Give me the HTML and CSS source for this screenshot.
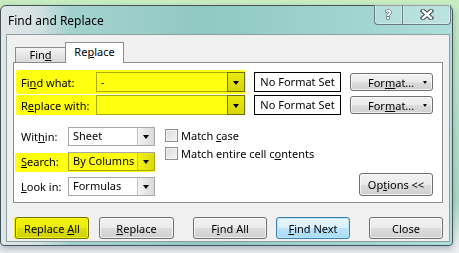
FILE: index.html
```html
<!DOCTYPE html>
<html lang="en">
<head>
    <meta charset="UTF-8">
    <title>Find and Replace</title>
    <link rel="stylesheet" href="styles.css">
</head>
<body>
    <div class="window">
        <div class="titlebar">
            <span class="title">Find and Replace</span>
            <div class="caption-btns">
                <span class="cap help">?</span>
                <span class="cap close">
                    <svg width="14" height="11" viewBox="0 0 14 11">
                        <path d="M3 2 L11 9 M11 2 L3 9" stroke="#3a4448" stroke-width="4.4" stroke-linecap="square" fill="none"/>
                        <path d="M3 2 L11 9 M11 2 L3 9" stroke="#ffffff" stroke-width="2.4" stroke-linecap="square" fill="none"/>
                    </svg>
                </span>
            </div>
        </div>

        <div class="client">
            <div class="tabs">
                <div class="tab">Fin<u>d</u></div>
                <div class="tab active">Re<u>p</u>lace</div>
            </div>

            <div class="panel">
                <div class="row">
                    <span class="lbl">Fi<u>n</u>d what:</span>
                    <div class="combo wide hot">
                        <span class="combo-text">-</span>
                        <span class="combo-btn"><i class="tri"></i></span>
                    </div>
                    <div class="fmt-box">No Format Set</div>
                    <button class="btn fmt"><span>For<u>m</u>at...</span> <span class="caret"></span></button>
                </div>
                <div class="row second">
                    <span class="lbl">R<u>e</u>place with:</span>
                    <div class="combo wide hot">
                        <span class="combo-text"></span>
                        <span class="combo-btn"><i class="tri"></i></span>
                    </div>
                    <div class="fmt-box">No Format Set</div>
                    <button class="btn fmt"><span>For<u>m</u>at...</span> <span class="caret"></span></button>
                </div>

                <div class="lower">
                    <div class="opts">
                        <div class="opt-row">
                            <span class="lbl small">Wit<u>h</u>in:</span>
                            <div class="combo select">
                                <span class="combo-text">Sheet</span>
                                <span class="combo-btn"><i class="tri"></i></span>
                            </div>
                        </div>
                        <div class="opt-row">
                            <span class="lbl small"><u>S</u>earch:</span>
                            <div class="combo select">
                                <span class="combo-text">By Columns</span>
                                <span class="combo-btn"><i class="tri"></i></span>
                            </div>
                        </div>
                        <div class="opt-row">
                            <span class="lbl small"><u>L</u>ook in:</span>
                            <div class="combo select">
                                <span class="combo-text">Formulas</span>
                                <span class="combo-btn"><i class="tri"></i></span>
                            </div>
                        </div>
                    </div>
                    <div class="checks">
                        <div class="check"><span class="box"></span><span>Match <u>c</u>ase</span></div>
                        <div class="check"><span class="box"></span><span>Match entire cell c<u>o</u>ntents</span></div>
                    </div>
                    <button class="btn options">Op<u>t</u>ions &lt;&lt;</button>
                </div>
            </div>

            <div class="actions">
                <button class="btn act">Replace <u>A</u>ll</button>
                <button class="btn act replace"><u>R</u>eplace</button>
                <button class="btn act gap">F<u>i</u>nd All</button>
                <button class="btn act default"><u>F</u>ind Next</button>
                <button class="btn act gap">Close</button>
            </div>
        </div>

        <!-- highlighter strokes -->
        <span class="hl hl-find"></span>
        <span class="hl hl-replace"></span>
        <span class="hl hl-search"></span>
        <span class="hl hl-all"></span>
    </div>
</body>
</html>
```

FILE: styles.css
```css
body {
    margin: 0;
    width: 459px;
    height: 253px;
    overflow: hidden;
    font-family: "Noto Sans", "Open Sans", sans-serif;
    font-size: 11px;
    color: #000000;
    background: linear-gradient(to bottom, #c8ecc1 0%, #acd8c6 80%, #eceff0 97%);
}

.window {
    position: relative;
    margin-top: 5px;
    width: 453px;
    height: 241px;
    box-sizing: border-box;
    border: 1px solid #44525a;
    border-radius: 6px 6px 4px 4px;
    background: linear-gradient(90deg, #e1e6e7 0, #d6e2e2 35px, #a3d2ce 70px, #91c8c3 45%, #9fd3cf 75%, #acdeda 100%);
    display: flex;
    flex-direction: column;
    box-shadow: 0 3px 6px rgba(60, 80, 110, 0.35);
}

.titlebar {
    height: 28px;
    display: flex;
    justify-content: space-between;
    align-items: flex-start;
}

.title {
    padding: 6px 0 0 7px;
    font-family: "Segoe UI", "Noto Sans", sans-serif;
    font-size: 12px;
}

.caption-btns {
    display: flex;
    margin: -1px 1px 0 0;
}

.cap {
    height: 19px;
    border: 1px solid #6a7a80;
    border-top: none;
    background: rgba(255, 255, 255, 0.18);
    display: flex;
    align-items: center;
    justify-content: center;
    box-shadow: inset 0 0 0 1px rgba(255, 255, 255, 0.35);
}

.help {
    width: 27px;
    border-radius: 0 0 0 4px;
    border-right: none;
    font-family: "DejaVu Sans", sans-serif;
    font-weight: bold;
    font-size: 12px;
    color: #ffffff;
    -webkit-text-stroke: 1px #3a4448;
    paint-order: stroke fill;
}

.close {
    width: 47px;
    border-radius: 0 0 4px 0;
}

.client {
    margin: 0 2px 3px 5px;
    height: 208px;
    box-sizing: border-box;
    border: 1px solid #8e9ea3;
    background: #f0f0f0;
}

.tabs {
    display: flex;
    align-items: flex-end;
    height: 20px;
    margin-top: 7px;
    padding-left: 8px;
}

.tab {
    width: 50px;
    height: 15px;
    box-sizing: border-box;
    border: 1px solid #898c95;
    border-bottom: none;
    border-right: none;
    background: linear-gradient(#f3f3f3, #e6e6e6 50%, #dadada);
    text-align: center;
    line-height: 13px;
}

.tab.active {
    position: relative;
    z-index: 1;
    width: 59px;
    height: 21px;
    margin-bottom: -1px;
    border-right: 1px solid #898c95;
    background: #ffffff;
    line-height: 18px;
}

.panel {
    margin: 0 6px;
    height: 141px;
    box-sizing: border-box;
    border: 1px solid #898c95;
    background: #ffffff;
    padding: 9px 9px 0 7px;
}

.row {
    display: flex;
    align-items: center;
    height: 20px;
}

.row.second {
    margin-top: 3px;
}

.lbl {
    width: 75px;
    flex: none;
}

.lbl.small {
    width: 47px;
}

.combo {
    display: flex;
    box-sizing: border-box;
    height: 20px;
    border: 1px solid #abadb3;
    background: #ffffff;
    flex: none;
}

.combo.wide {
    width: 149px;
}

.combo.select {
    width: 87px;
    height: 19px;
    border-color: #a7a7a7;
}

.combo-text {
    flex: 1;
    padding-left: 4px;
    line-height: 17px;
}

.select .combo-text {
    line-height: 16px;
}

.combo-btn {
    width: 17px;
    box-sizing: border-box;
    border-left: 1px solid #c4c4c4;
    background: linear-gradient(90deg, #f4f4f4, #e6e6e6 50%, #d9d9d9);
    display: flex;
    align-items: center;
    justify-content: center;
}

.hot .combo-btn {
    border: 1px solid #6e6e6e;
    margin: -1px -1px -1px 0;
    width: 18px;
    background: linear-gradient(#eaeaea, #d6d6d6);
}

.tri {
    width: 0;
    height: 0;
    border-left: 3.5px solid transparent;
    border-right: 3.5px solid transparent;
    border-top: 4px solid #000000;
    margin-top: 1px;
}

.fmt-box {
    width: 87px;
    height: 20px;
    box-sizing: border-box;
    margin-left: 9px;
    border: 1px solid #000000;
    text-align: center;
    line-height: 17px;
}

.btn {
    font-family: inherit;
    font-size: 11px;
    color: #000000;
    padding: 0;
    box-sizing: border-box;
    border: 1px solid #707070;
    border-radius: 3px;
    background: linear-gradient(#f2f2f2 0%, #ebebeb 50%, #dddddd 51%, #cfcfcf 100%);
    box-shadow: inset 0 0 0 1px rgba(255, 255, 255, 0.7);
}

.btn.fmt {
    width: 83px;
    height: 18px;
    margin-left: 9px;
    display: flex;
    align-items: center;
    padding-left: 17px;
}

.caret {
    margin-left: auto;
    margin-right: 5px;
    width: 0;
    height: 0;
    border-left: 2.5px solid transparent;
    border-right: 2.5px solid transparent;
    border-top: 3px solid #000000;
}

.lower {
    display: flex;
    margin-top: 12px;
}

.opts {
    display: flex;
    flex-direction: column;
    gap: 6px;
}

.opt-row {
    display: flex;
    align-items: center;
    height: 19px;
}

.checks {
    margin-left: 10px;
    margin-top: -1px;
}

.check {
    display: flex;
    align-items: center;
    height: 18px;
}

.box {
    width: 13px;
    height: 13px;
    box-sizing: border-box;
    border: 1px solid #8e8f8f;
    background: linear-gradient(135deg, #d8d8d8, #f6f6f6);
    box-shadow: inset 0 0 0 1px #f4f4f4;
    margin-right: 3px;
}

.btn.options {
    margin-left: auto;
    align-self: flex-end;
    width: 74px;
    height: 23px;
}

.actions {
    display: flex;
    margin-top: 14px;
    padding-left: 8px;
}

.btn.act {
    width: 74px;
    height: 22px;
}

.btn.replace {
    width: 75px;
    margin-left: 10px;
}

.btn.gap {
    margin-left: 19px;
}

.btn.default {
    margin-left: 9px;
    border-color: #3c7fb1;
    background: linear-gradient(#eaf6fd 0%, #d9f0fc 50%, #bee6fd 51%, #a7d9f5 100%);
    box-shadow: inset 0 0 0 1px #b8e6fb;
}

.hl {
    position: absolute;
    background: #ffff10;
    mix-blend-mode: multiply;
    border-radius: 2px;
}

.hl-find {
    left: 15px;
    top: 64px;
    width: 230px;
    height: 24px;
}

.hl-replace {
    left: 15px;
    top: 89px;
    width: 230px;
    height: 20px;
}

.hl-search {
    left: 14px;
    top: 147px;
    width: 140px;
    height: 19px;
}

.hl-all {
    left: 13px;
    top: 211px;
    width: 75px;
    height: 22px;
}
```
